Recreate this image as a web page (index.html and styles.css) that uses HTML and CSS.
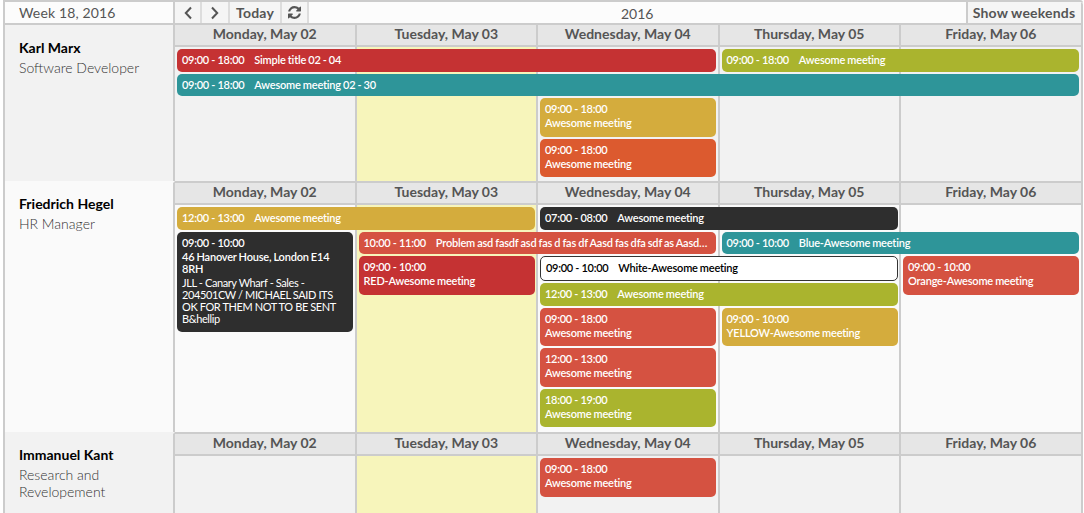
FILE: index.html
```html
<!DOCTYPE html>
<html lang="en">
<head>
    <meta charset="UTF-8">
    <meta name="viewport" content="width=device-width, initial-scale=1.0">
    <title>Scheduler</title>
    <link rel="stylesheet" href="styles.css">
</head>
<body>
    <div class="scheduler">

        <!-- toolbar -->
        <div class="toolbar">
            <div class="week">Week 18, 2016</div>
            <button class="tool tool-prev" aria-label="Previous">
                <svg width="10" height="14" viewBox="0 0 10 14"><path d="M8 1.5 2.8 7 8 12.5" fill="none" stroke="#555" stroke-width="2"/></svg>
            </button>
            <button class="tool tool-next" aria-label="Next">
                <svg width="10" height="14" viewBox="0 0 10 14"><path d="M2 1.5 7.2 7 2 12.5" fill="none" stroke="#555" stroke-width="2"/></svg>
            </button>
            <button class="tool tool-today">Today</button>
            <button class="tool tool-refresh" aria-label="Refresh">
                <svg width="13" height="13" viewBox="0 0 1536 1536"><path fill="#555" d="M1511 928q0 5-1 7-64 268-268 434.5t-478 166.5q-146 0-282.5-55t-243.5-157l-129 129q-19 19-45 19t-45-19-19-45v-448q0-26 19-45t45-19h448q26 0 45 19t19 45-19 45l-137 137q71 66 161 102t187 36q134 0 250-65t186-179q11-17 53-117 8-23 30-23h192q13 0 22.5 9.5t9.5 22.5zm25-800v448q0 26-19 45t-45 19h-448q-26 0-45-19t-19-45 19-45l138-138q-148-137-349-137-134 0-250 65t-186 179q-11 17-53 117-8 23-30 23h-199q-13 0-22.5-9.5t-9.5-22.5v-7q65-268 270-434.5t480-166.5q146 0 284 55.5t245 156.5l130-129q19-19 45-19t45 19 19 45z"/></svg>
            </button>
            <div class="year">2016</div>
            <button class="tool tool-weekends">Show weekends</button>
        </div>

        <!-- Karl Marx -->
        <div class="person-row grey">
            <div class="person">
                <div class="name">Karl Marx</div>
                <div class="role">Software Developer</div>
            </div>
            <div class="week-view">
                <div class="day-heads">
                    <div class="day-head">Monday, May 02</div>
                    <div class="day-head">Tuesday, May 03</div>
                    <div class="day-head">Wednesday, May 04</div>
                    <div class="day-head">Thursday, May 05</div>
                    <div class="day-head">Friday, May 06</div>
                </div>
                <div class="day-body">
                    <div class="cells">
                        <div class="cell"></div>
                        <div class="cell today"></div>
                        <div class="cell"></div>
                        <div class="cell"></div>
                        <div class="cell"></div>
                    </div>
                    <div class="lanes">
                        <div class="event red from-1 span-3 lane-1"><span class="time">09:00 - 18:00</span><span class="title">Simple title 02 - 04</span></div>
                        <div class="event olive from-4 span-2 lane-1"><span class="time">09:00 - 18:00</span><span class="title">Awesome meeting</span></div>
                        <div class="event teal from-1 span-5 lane-2"><span class="time">09:00 - 18:00</span><span class="title">Awesome meeting 02 - 30</span></div>
                        <div class="event stacked yellow from-3 lane-3"><span class="time">09:00 - 18:00</span><span class="title">Awesome meeting</span></div>
                        <div class="event stacked orange from-3 lane-4"><span class="time">09:00 - 18:00</span><span class="title">Awesome meeting</span></div>
                    </div>
                </div>
            </div>
        </div>

        <!-- Friedrich Hegel -->
        <div class="person-row light">
            <div class="person">
                <div class="name">Friedrich Hegel</div>
                <div class="role">HR Manager</div>
            </div>
            <div class="week-view">
                <div class="day-heads">
                    <div class="day-head">Monday, May 02</div>
                    <div class="day-head">Tuesday, May 03</div>
                    <div class="day-head">Wednesday, May 04</div>
                    <div class="day-head">Thursday, May 05</div>
                    <div class="day-head">Friday, May 06</div>
                </div>
                <div class="day-body">
                    <div class="cells">
                        <div class="cell"></div>
                        <div class="cell today"></div>
                        <div class="cell"></div>
                        <div class="cell"></div>
                        <div class="cell"></div>
                    </div>
                    <div class="lanes">
                        <div class="event yellow from-1 span-2 lane-1"><span class="time">12:00 - 13:00</span><span class="title">Awesome meeting</span></div>
                        <div class="event dark from-3 span-2 lane-1"><span class="time">07:00 - 08:00</span><span class="title">Awesome meeting</span></div>

                        <div class="event stacked dark from-1 lane-2 tall">
                            <span class="time">09:00 - 10:00</span>
                            <span class="title">46 Hanover House, London E14 8RH</span>
                            <span class="note">JLL - Canary Wharf - Sales - 204501CW / MICHAEL SAID ITS OK FOR THEM NOT TO BE SENT B&amp;hellip</span>
                        </div>
                        <div class="event tomato from-2 span-2 lane-2"><span class="time">10:00 - 11:00</span><span class="title">Problem asd fasdf asd fas d fas df Aasd fas dfa sdf as Aasd…</span></div>
                        <div class="event teal from-4 span-2 lane-2"><span class="time">09:00 - 10:00</span><span class="title">Blue-Awesome meeting</span></div>

                        <div class="event stacked red from-2 lane-3 span-lanes"><span class="time">09:00 - 10:00</span><span class="title">RED-Awesome meeting</span></div>
                        <div class="event white from-3 span-2 lane-3"><span class="time">09:00 - 10:00</span><span class="title">White-Awesome meeting</span></div>
                        <div class="event stacked tomato from-5 lane-3 span-lanes"><span class="time">09:00 - 10:00</span><span class="title">Orange-Awesome meeting</span></div>

                        <div class="event olive from-3 span-2 lane-4"><span class="time">12:00 - 13:00</span><span class="title">Awesome meeting</span></div>

                        <div class="event stacked tomato from-3 lane-5"><span class="time">09:00 - 18:00</span><span class="title">Awesome meeting</span></div>
                        <div class="event stacked yellow from-4 lane-5"><span class="time">09:00 - 10:00</span><span class="title">YELLOW-Awesome meeting</span></div>
                        <div class="event stacked tomato from-3 lane-6"><span class="time">12:00 - 13:00</span><span class="title">Awesome meeting</span></div>
                        <div class="event stacked olive from-3 lane-7"><span class="time">18:00 - 19:00</span><span class="title">Awesome meeting</span></div>
                    </div>
                </div>
            </div>
        </div>

        <!-- Immanuel Kant -->
        <div class="person-row grey">
            <div class="person">
                <div class="name">Immanuel Kant</div>
                <div class="role">Research and Revelopement</div>
            </div>
            <div class="week-view">
                <div class="day-heads">
                    <div class="day-head">Monday, May 02</div>
                    <div class="day-head">Tuesday, May 03</div>
                    <div class="day-head">Wednesday, May 04</div>
                    <div class="day-head">Thursday, May 05</div>
                    <div class="day-head">Friday, May 06</div>
                </div>
                <div class="day-body">
                    <div class="cells">
                        <div class="cell"></div>
                        <div class="cell today"></div>
                        <div class="cell"></div>
                        <div class="cell"></div>
                        <div class="cell"></div>
                    </div>
                    <div class="lanes">
                        <div class="event stacked tomato from-3 lane-1"><span class="time">09:00 - 18:00</span><span class="title">Awesome meeting</span></div>
                    </div>
                </div>
            </div>
        </div>

    </div>
</body>
</html>
```

FILE: styles.css
```css
html, body {
    height: 100%;
    overflow: hidden;
}
body {
    margin: 0;
    background-color: #fff;
    font-family: 'Lato', 'Open Sans', sans-serif;
    color: #555;
}
.scheduler {
    margin: 0 1.5px 0 3px;
    border-left: 2px solid #ccc;
    border-top: 2px solid #ccc;
    border-top-right-radius: 3px;
}

/* toolbar */
.toolbar {
    display: flex;
    height: 21px;
    background-color: #fcfcfc;
    border-right: 2px solid #ccc;
    border-top-right-radius: 3px;
}
.week {
    box-sizing: border-box;
    width: 170px;
    padding-left: 14px;
    border-right: 2px solid #ccc;
    font-size: 14px;
    letter-spacing: 0.15px;
    line-height: 22px;
}
.tool {
    box-sizing: border-box;
    margin: 0;
    padding: 0;
    border: none;
    border-right: 2px solid #ddd;
    background-color: #f5f5f5;
    color: #555;
    font-family: inherit;
    font-size: 14px;
    font-weight: 700;
    letter-spacing: 0.2px;
    display: flex;
    align-items: center;
    justify-content: center;
}
.tool-prev { width: 27px; }
.tool-next { width: 28px; }
.tool-today { width: 52px; }
.tool-refresh { width: 27px; }
.tool-weekends {
    width: 115px;
    border-right: none;
    border-left: 2px solid #ccc;
}
.year {
    flex: 1;
    text-align: center;
    font-size: 14px;
    line-height: 23px;
}

/* one row per person */
.person-row {
    display: grid;
    grid-template-columns: 170px 1fr;
}
.person-row:last-child {
    min-height: 90px;
}
.grey { background-color: #f2f2f2; }
.light { background-color: #fafafa; }
.person {
    padding: 12px 10px 0 14px;
    border-right: 2px solid #ccc;
    border-top: 2px solid transparent;
}
.person-row:nth-child(2) .person {
    padding-top: 14px;
    border-top-color: #ccc;
}
.name {
    font-size: 14px;
    font-weight: 700;
    line-height: 17px;
    color: #000;
}
.role {
    margin-top: 3px;
    font-size: 14px;
    font-weight: 300;
    line-height: 17px;
    color: #333;
}

/* days */
.week-view {
    display: flex;
    flex-direction: column;
}
.day-heads, .cells, .lanes {
    display: grid;
    grid-template-columns: repeat(5, 1fr);
}
.day-head {
    height: 20px;
    border-top: 2px solid #ccc;
    border-bottom: 2px solid #ccc;
    border-right: 2px solid #ccc;
    background-color: #e6e6e6;
    text-align: center;
    font-size: 14px;
    font-weight: 700;
    line-height: 18px;
}
.day-body {
    flex: 1;
    display: grid;
}
.cells, .lanes {
    grid-area: 1 / 1;
}
.cell {
    border-right: 2px solid #ccc;
}
.today {
    background-color: #f7f5bb;
}
.lanes {
    row-gap: 2px;
    padding: 2px 0 4px;
    align-items: start;
}
.light .lanes {
    padding-bottom: 5px;
}

/* events */
.event {
    margin: 0 3.5px 0 2px;
    padding: 5px 5px 5.5px;
    border-radius: 5px;
    color: #fff;
    font-size: 11px;
    font-weight: 600;
    line-height: 12px;
    white-space: nowrap;
    overflow: hidden;
    text-overflow: ellipsis;
}
.time {
    letter-spacing: -0.3px;
}
.title {
    margin-left: 10px;
    letter-spacing: -0.2px;
    word-spacing: -0.4px;
}
.stacked {
    padding-bottom: 7.5px;
    white-space: normal;
}
.stacked .title {
    margin-left: 0;
}
.stacked span {
    display: block;
    margin-bottom: 2px;
}
.stacked span:last-child {
    margin-bottom: 0;
}
.note {
    font-weight: 400;
    letter-spacing: -0.4px;
}

.red { background-color: #c53233; }
.teal { background-color: #2e9599; }
.olive { background-color: #aab42e; }
.yellow { background-color: #d4ac3d; }
.orange { background-color: #dc5a2f; }
.tomato { background-color: #d55241; }
.dark { background-color: #2e2e2e; }
.white {
    padding-bottom: 6px;
    background-color: #fff;
    border: 1px solid #333;
    color: #000;
}

.from-1 { grid-column-start: 1; }
.from-2 { grid-column-start: 2; }
.from-3 { grid-column-start: 3; }
.from-4 { grid-column-start: 4; }
.from-5 { grid-column-start: 5; }
.span-2 { grid-column-end: span 2; }
.span-3 { grid-column-end: span 3; }
.span-5 { grid-column-end: span 5; }
.lane-1 { grid-row-start: 1; }
.lane-2 { grid-row-start: 2; }
.lane-3 { grid-row-start: 3; }
.lane-4 { grid-row-start: 4; }
.lane-5 { grid-row-start: 5; }
.lane-6 { grid-row-start: 6; }
.lane-7 { grid-row-start: 7; }
.span-lanes { grid-row-end: span 2; }
.tall { grid-row-end: span 4; }
```
